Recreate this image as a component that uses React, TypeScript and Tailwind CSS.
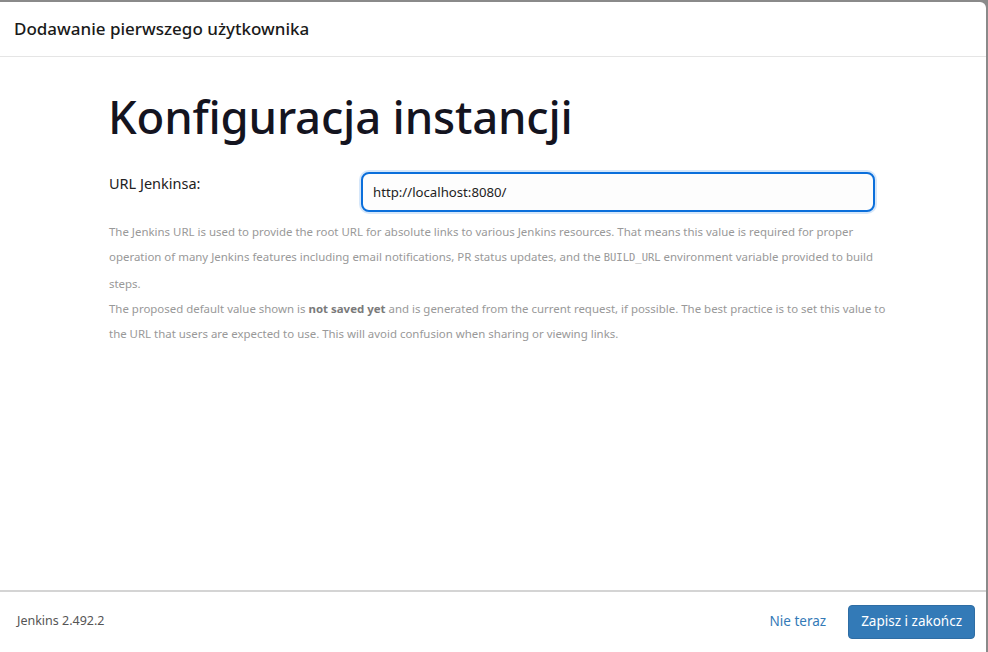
const App = () => {
    return (
        <div className="w-[988px] h-[652px] bg-[#8a8a8a] font-['Noto_Sans',sans-serif] overflow-hidden">
            <div className="w-[986px] h-[652px] bg-white rounded-tr-[6px] mt-[2px] flex flex-col">
                <div className="h-[55px] flex items-center px-[14px] border-b border-[#e5e5e5] shrink-0">
                    <h4 className="text-[17px] font-medium text-[#1a1a1a]">Dodawanie pierwszego użytkownika</h4>
                </div>

                <div className="flex-1 pl-[108px] pr-[109px]">
                    <h1 className="mt-[27px] text-[45.5px] leading-[64px] font-medium text-[#14141f] tracking-[-0.2px]">Konfiguracja instancji</h1>

                    <div className="mt-[22px] flex">
                        <label className="w-[251px] pt-[3px] pl-[1px] text-[14.5px] text-[#222] shrink-0">URL Jenkinsa:</label>
                        <div className="flex-1 rounded-[10px] bg-[#d6e7fa] p-[2px]">
                            <input
                                className="w-full h-[40px] rounded-[8px] border-2 border-[#0b6fdb] bg-[#fdfdfd] px-[10px] text-[13.2px] text-[#222] outline-none"
                                defaultValue="http://localhost:8080/"
                            />
                        </div>
                    </div>

                    <div className="mt-[5px] pl-[1px] -mr-[20px] text-[11.45px] leading-[25.3px] text-[#999] whitespace-nowrap">
                        <p>
                            The Jenkins URL is used to provide the root URL for absolute links to various Jenkins resources. That means this value is required for proper<br />
                            operation of many Jenkins features including email notifications, PR status updates, and the <code className="font-['DejaVu_Sans_Mono',monospace] text-[10.5px]">BUILD_URL</code> environment variable provided to build<br />
                            steps.
                        </p>
                        <p>
                            The proposed default value shown is <strong className="font-bold text-[#7a7a7a]">not saved yet</strong> and is generated from the current request, if possible. The best practice is to set this value to<br />
                            the URL that users are expected to use. This will avoid confusion when sharing or viewing links.
                        </p>
                    </div>
                </div>

                <div className="h-[64px] border-t-2 border-[#d4d4d4] flex items-center justify-between pl-[17px] pr-[11px] pb-[3px] shrink-0">
                    <span className="text-[12.5px] text-[#555]">Jenkins 2.492.2</span>
                    <div className="flex items-center gap-[22px]">
                        <a href="#" className="text-[13.5px] text-[#337ab7]">Nie teraz</a>
                        <button className="h-[34px] px-[12px] rounded-[4px] bg-[#337ab7] border border-[#2e6da4] text-white text-[13.5px]">Zapisz i zakończ</button>
                    </div>
                </div>
            </div>
        </div>
    )
}

export default App
